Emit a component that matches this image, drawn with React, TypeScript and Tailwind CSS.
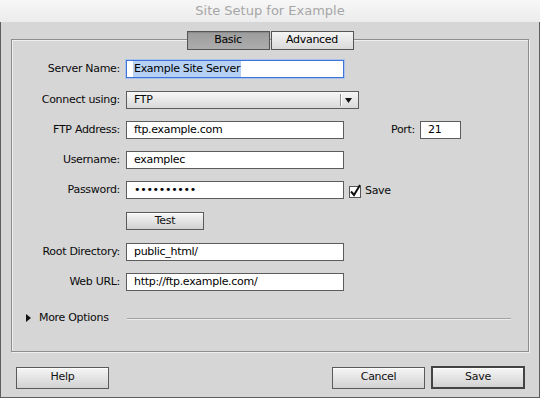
import React from 'react';

const btn =
  'flex items-center justify-center border border-[#5a5a5a] bg-gradient-to-b from-[#f6f6f6] to-[#d2d2d2] shadow-[inset_0_1px_0_#ffffff] text-[#111]';

const field = 'h-[18px] border border-[#5c5c5c] bg-white pl-[7px] flex items-center text-[#000]';

const Row: React.FC<{ label: string; top: string; children: React.ReactNode }> = ({ label, top, children }) => (
  <div className={`flex items-center h-[18px] ${top}`}>
    <div className="w-[108px] text-right">{label}</div>
    <div className="ml-[6px] flex items-center">{children}</div>
  </div>
);

const App: React.FC = () => {
  return (
    <div className="w-[540px] h-[398px] flex flex-col bg-[#d6d6d6] font-['Lucida_Grande','DejaVu_Sans',sans-serif] text-[11px] tracking-[-0.3px] text-[#0a0a0a] select-none">
      {/* title bar */}
      <div className="h-[22px] bg-gradient-to-b from-[#f7f7f7] to-[#ececec] text-center text-[13px] leading-[22px] text-[#a6a6a6] tracking-normal">
        Site Setup for Example
      </div>

      {/* window body */}
      <div className="flex-1 flex flex-col border-x border-b border-[#5e5e5e] px-[10px] pt-[17px]">
        {/* group box */}
        <div className="h-[313px] flex flex-col border border-[#8d8d8d] shadow-[inset_1px_1px_0_#eeeeee,1px_1px_0_#eeeeee]">
          {/* tabs */}
          <div className="-mt-[9px] flex justify-center">
            <div className="w-[83px] h-[19px] flex items-center justify-center border border-[#555] bg-gradient-to-b from-[#9c9c9c] to-[#adadad] shadow-[inset_0_1px_1px_#8a8a8a] text-[#000]">
              Basic
            </div>
            <div className="ml-[1px] w-[83px] h-[19px] flex items-center justify-center border border-[#555] bg-gradient-to-b from-[#f4f4f4] to-[#dadada] text-[#000]">
              Advanced
            </div>
          </div>

          <Row label="Server Name:" top="mt-[10px]">
            <div className="w-[218px] h-[18px] border border-[#3f73d6] bg-white shadow-[0_0_0_1px_#a9c3ee] pl-[6px] flex items-center text-[#000]">
              <span className="bg-[#b6d1f4] px-[1px]">Example Site Server</span>
            </div>
          </Row>

          <Row label="Connect using:" top="mt-[13px]">
            <div className="relative w-[233px] h-[18px] border border-[#5c5c5c] bg-gradient-to-b from-[#f7f7f7] to-[#d9d9d9] pl-[7px] flex items-center">
              FTP
              <div className="absolute right-[17px] top-[2px] h-[12px] border-l border-[#8f8f8f] shadow-[1px_0_0_#ffffff]" />
              <svg className="absolute right-[6px] top-[6px]" width="7" height="5" viewBox="0 0 7 5">
                <path d="M0 0 L7 0 L3.5 5 Z" fill="#111" />
              </svg>
            </div>
          </Row>

          <Row label="FTP Address:" top="mt-[12px]">
            <div className={`${field} w-[218px]`}>ftp.example.com</div>
            <span className="ml-[47px]">Port:</span>
            <div className={`${field} ml-[5px] w-[41px]`}>21</div>
          </Row>

          <Row label="Username:" top="mt-[12px]">
            <div className={`${field} w-[218px]`}>examplec</div>
          </Row>

          <Row label="Password:" top="mt-[12px]">
            <div className={`${field} w-[218px]`}>••••••••••</div>
            <div className="relative ml-[5px] mt-[3px] w-[12px] h-[12px] border border-[#555] bg-white">
              <svg className="absolute -left-[1px] -top-[3px]" width="13" height="14" viewBox="0 0 13 14">
                <path d="M2 7.5 L5 11 L11 1" fill="none" stroke="#111" strokeWidth="2" />
              </svg>
            </div>
            <span className="ml-[4px] mt-[3px]">Save</span>
          </Row>

          <Row label="" top="mt-[13px]">
            <div className={`${btn} w-[78px] h-[18px]`}>Test</div>
          </Row>

          <Row label="Root Directory:" top="mt-[13px]">
            <div className={`${field} w-[218px]`}>public_html/</div>
          </Row>

          <Row label="Web URL:" top="mt-[12px]">
            <div className={`${field} w-[218px]`}>http://ftp.example.com/</div>
          </Row>

          {/* more options */}
          <div className="mt-[20px] flex items-center h-[14px] pl-[14px] pr-[17px]">
            <svg width="5" height="8" viewBox="0 0 5 8">
              <path d="M0 0 L5 4 L0 8 Z" fill="#111" />
            </svg>
            <span className="ml-[8px]">More Options</span>
            <div className="ml-[18px] flex-1 border-t border-[#a2a2a2] shadow-[0_1px_0_#ececec]" />
          </div>
        </div>

        {/* buttons */}
        <div className="mt-[14px] flex items-center h-[23px] pl-[5px] pr-[4px]">
          <div className={`${btn} w-[93px] h-[22px]`}>Help</div>
          <div className="flex-1" />
          <div className={`${btn} w-[93px] h-[22px]`}>Cancel</div>
          <div className={`${btn} ml-[6px] w-[94px] h-[23px] border-2 border-[#444]`}>Save</div>
        </div>
      </div>
    </div>
  );
};

export default App;
